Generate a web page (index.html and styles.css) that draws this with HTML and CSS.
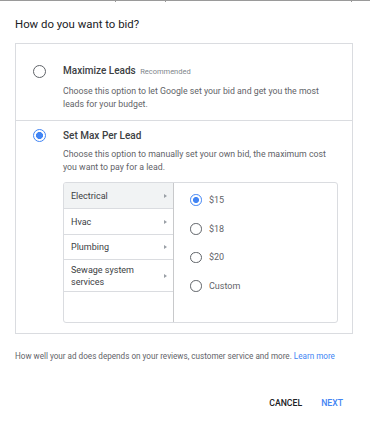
FILE: index.html
```html
<!DOCTYPE html>
<html>
<head>
<meta charset="utf-8">
<link rel="stylesheet" href="styles.css">
</head>
<body>
<div class="topbar"><span class="seg s1"></span><span class="seg s2"></span><span class="seg s3"></span><span class="seg s4"></span></div>
<div class="dialog">
  <h1 class="title">How do you want to bid?</h1>
  <div class="options">
    <div class="option first">
      <span class="radio"></span>
      <div class="head">Maximize Leads <span class="tag">Recommended</span></div>
      <p class="desc">Choose this option to let Google set your bid and get you the most leads for your budget.</p>
    </div>
    <div class="option second">
      <span class="radio on"></span>
      <div class="head">Set Max Per Lead</div>
      <p class="desc">Choose this option to manually set your own bid, the maximum cost you want to pay for a lead.</p>
      <div class="picker">
        <div class="cats">
          <div class="cat active h25"><span>Electrical</span><i class="arrow"></i></div>
          <div class="cat h25"><span>Hvac</span><i class="arrow"></i></div>
          <div class="cat h24"><span>Plumbing</span><i class="arrow"></i></div>
          <div class="cat h31"><span>Sewage system<br>services</span><i class="arrow"></i></div>
        </div>
        <div class="prices">
          <div class="price"><span class="radio small on"></span><span>$15</span></div>
          <div class="price"><span class="radio small"></span><span>$18</span></div>
          <div class="price"><span class="radio small"></span><span>$20</span></div>
          <div class="price"><span class="radio small"></span><span>Custom</span></div>
        </div>
      </div>
    </div>
  </div>
  <p class="note">How well your ad does depends on your reviews, customer service and more. <a class="link">Learn more</a></p>
  <div class="actions">
    <span class="btn cancel">CANCEL</span>
    <span class="btn next">NEXT</span>
  </div>
</div>
</body>
</html>
```

FILE: styles.css
```css
html, body {
  margin: 0;
  padding: 0;
  background: #ffffff;
}
body {
  width: 370px;
  height: 425px;
  overflow: hidden;
  font-family: Roboto, "Liberation Sans", sans-serif;
  color: #3c4043;
}
.topbar {
  display: flex;
  height: 2px;
}
.seg {
  display: block;
  height: 2px;
  box-sizing: border-box;
  border-top: 1px solid #9a9a9a;
  border-right: 1px solid #9a9a9a;
}
.s1 { width: 116px; }
.s2 { width: 50px; }
.s3 { width: 186px; }
.s4 { flex: 1; border-right: none; }

.dialog {
  padding: 0 17px 0 15px;
}
.title {
  margin: 14px 0 0 0;
  font-size: 11.4px;
  line-height: 16px;
  font-weight: 400;
  color: #202124;
}
.options {
  margin-top: 11px;
  border: 1px solid #dadce0;
}
.option {
  display: grid;
  grid-template-columns: 47px 275px;
  align-items: center;
}
.option.first {
  padding: 20px 0 9px 0;
}
.option.second {
  border-top: 1px solid #dadce0;
  padding: 8.4px 0 10px 0;
}
.radio {
  grid-column: 1;
  grid-row: 1;
  justify-self: center;
  display: block;
  width: 13px;
  height: 13px;
  box-sizing: border-box;
  border: 1.6px solid #5f6368;
  border-radius: 50%;
}
.radio.on {
  border-color: #4285f4;
  background: radial-gradient(circle, #4285f4 0, #4285f4 3.2px, transparent 3.8px);
}
.radio.small {
  width: 11.5px;
  height: 11.5px;
  border-width: 1.4px;
}
.radio.small.on {
  background: radial-gradient(circle, #4285f4 0, #4285f4 2.7px, transparent 3.3px);
}
.head {
  grid-column: 2;
  grid-row: 1;
  font-size: 10px;
  line-height: 14px;
  font-weight: 500;
  color: #3c4043;
}
.tag {
  font-size: 7.5px;
  font-weight: 400;
  color: #80868b;
  margin-left: 2px;
}
.desc {
  grid-column: 2;
  grid-row: 2;
  margin: 5.5px 0 0 0;
  font-size: 8.75px;
  line-height: 13px;
  color: #5f6368;
}
.picker {
  grid-column: 2;
  grid-row: 3;
  margin-top: 8px;
  height: 141px;
  box-sizing: border-box;
  border: 1px solid #dadce0;
  border-radius: 3px;
  display: flex;
  overflow: hidden;
}
.cats {
  width: 110px;
  box-sizing: border-box;
  border-right: 1px solid #c8c9cb;
  display: flex;
  flex-direction: column;
}
.cat {
  display: flex;
  align-items: center;
  justify-content: space-between;
  padding: 0 6px 0 7px;
  border-bottom: 1px solid #dadce0;
  font-size: 9px;
  line-height: 12px;
  color: #3c4043;
}
.cat.active { background: #f1f3f4; }
.h25 { height: 25px; }
.h24 { height: 24px; }
.h31 { height: 31px; }
.arrow {
  display: block;
  width: 0;
  height: 0;
  border-left: 3px solid #9aa0a6;
  border-top: 2.5px solid transparent;
  border-bottom: 2.5px solid transparent;
}
.prices {
  flex: 1;
  padding: 2.5px 0 0 16px;
}
.price {
  height: 28.6px;
  display: flex;
  align-items: center;
  gap: 7.5px;
  font-size: 9px;
  color: #5f6368;
}
.note {
  margin: 15.6px 0 0 0;
  font-size: 8.15px;
  line-height: 12px;
  color: #5f6368;
  white-space: nowrap;
}
.link {
  color: #4285f4;
}
.actions {
  margin-top: 35px;
  display: flex;
  justify-content: flex-end;
  gap: 19px;
  padding-right: 10px;
}
.btn {
  font-size: 8.7px;
  line-height: 12px;
  font-weight: 500;
}
.cancel { color: #202124; }
.next { color: #4285f4; }
```
